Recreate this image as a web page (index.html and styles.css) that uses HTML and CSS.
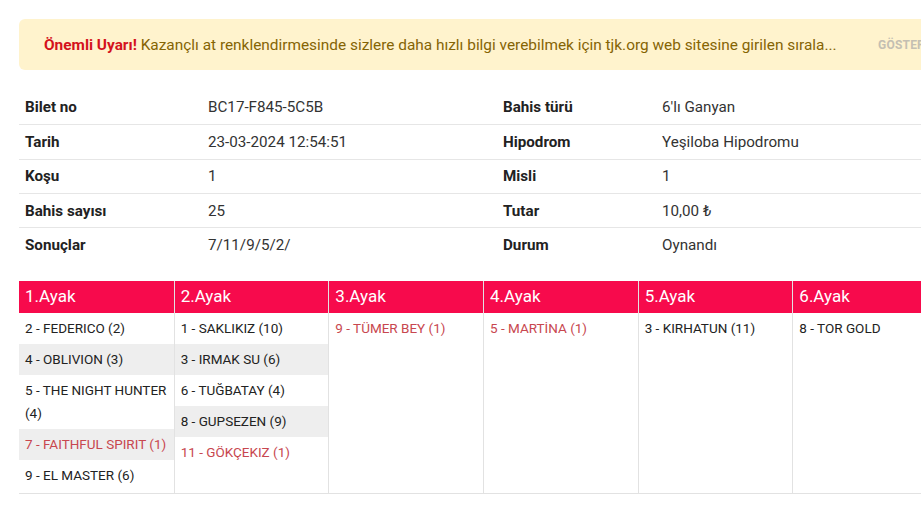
FILE: index.html
```html
<!DOCTYPE html>
<html lang="tr">
<head>
<meta charset="utf-8">
<link rel="stylesheet" href="styles.css">
</head>
<body>
<div class="page">
  <div class="alert">
    <p class="alert-text"><strong>Önemli Uyarı!</strong> Kazançlı at renklendirmesinde sizlere daha hızlı bilgi verebilmek için tjk.org web sitesine girilen sırala...</p>
    <span class="alert-btn">GÖSTER</span>
  </div>

  <div class="info">
    <div class="info-row"><span class="lbl">Bilet no</span><span class="val">BC17-F845-5C5B</span><span class="lbl">Bahis türü</span><span class="val">6'lı Ganyan</span></div>
    <div class="info-row"><span class="lbl">Tarih</span><span class="val">23-03-2024 12:54:51</span><span class="lbl">Hipodrom</span><span class="val">Yeşiloba Hipodromu</span></div>
    <div class="info-row"><span class="lbl">Koşu</span><span class="val">1</span><span class="lbl">Misli</span><span class="val">1</span></div>
    <div class="info-row"><span class="lbl">Bahis sayısı</span><span class="val">25</span><span class="lbl">Tutar</span><span class="val">10,00 ₺</span></div>
    <div class="info-row"><span class="lbl">Sonuçlar</span><span class="val">7/11/9/5/2/</span><span class="lbl">Durum</span><span class="val">Oynandı</span></div>
  </div>

  <div class="legs">
    <div class="leg">
      <div class="leg-head">1.Ayak</div>
      <div class="horse">2 - FEDERICO (2)</div>
      <div class="horse alt">4 - OBLIVION (3)</div>
      <div class="horse">5 - THE NIGHT HUNTER (4)</div>
      <div class="horse alt win">7 - FAITHFUL SPIRIT (1)</div>
      <div class="horse">9 - EL MASTER (6)</div>
    </div>
    <div class="leg">
      <div class="leg-head">2.Ayak</div>
      <div class="horse">1 - SAKLIKIZ (10)</div>
      <div class="horse alt">3 - IRMAK SU (6)</div>
      <div class="horse">6 - TUĞBATAY (4)</div>
      <div class="horse alt">8 - GUPSEZEN (9)</div>
      <div class="horse win">11 - GÖKÇEKIZ (1)</div>
    </div>
    <div class="leg">
      <div class="leg-head">3.Ayak</div>
      <div class="horse win">9 - TÜMER BEY (1)</div>
    </div>
    <div class="leg">
      <div class="leg-head">4.Ayak</div>
      <div class="horse win">5 - MARTİNA (1)</div>
    </div>
    <div class="leg">
      <div class="leg-head">5.Ayak</div>
      <div class="horse">3 - KIRHATUN (11)</div>
    </div>
    <div class="leg">
      <div class="leg-head">6.Ayak</div>
      <div class="horse">8 - TOR GOLD</div>
    </div>
  </div>
</div>
</body>
</html>
```

FILE: styles.css
```css
html, body {
  margin: 0;
  padding: 0;
  background: #ffffff;
  overflow: hidden;
}
body {
  font-family: Roboto, "Liberation Sans", sans-serif;
  color: #333;
}
.page {
  width: 928px;
  margin: 0 0 0 19px;
  padding-top: 19px;
}
.alert {
  display: flex;
  align-items: center;
  justify-content: space-between;
  height: 51px;
  box-sizing: border-box;
  padding: 0 22px 0 25px;
  background: #fff3cd;
  border-radius: 6px;
  color: #856404;
}
.alert-text {
  margin: 0;
  font-size: 15.4px;
  white-space: nowrap;
}
.alert-text strong {
  color: #d4121c;
  font-weight: 700;
}
.alert-btn {
  font-size: 12px;
  font-weight: 700;
  color: #c4bfb2;
  letter-spacing: 0.2px;
}
.info {
  margin-top: 20px;
}
.info-row {
  display: grid;
  grid-template-columns: 183px 295px 159px 1fr;
  padding-left: 6px;
  height: 34.3px;
  box-sizing: border-box;
  align-items: center;
  font-size: 15.2px;
}
.info-row + .info-row {
  border-top: 1px solid #e6e6e6;
}
.lbl {
  font-weight: 700;
  color: #222;
}
.val {
  color: #333;
}
.legs {
  margin-top: 20px;
  display: grid;
  grid-template-columns: repeat(6, 1fr);
  height: 212px;
  border-bottom: 1px solid #e2e2e2;
}
.leg {
  display: flex;
  flex-direction: column;
  border-left: 1px solid #e2e2e2;
}
.leg:first-child {
  border-left: none;
}
.leg-head {
  background: #f70a4c;
  color: #fff;
  font-size: 17px;
  height: 32px;
  line-height: 31px;
  padding-left: 6px;
}
.horse {
  font-size: 13.5px;
  line-height: 23px;
  padding: 4px 2px 4px 6px;
  color: #222;
}
.horse.alt {
  background: #eeeeee;
}
.horse.win {
  color: #c8474f;
}
```
